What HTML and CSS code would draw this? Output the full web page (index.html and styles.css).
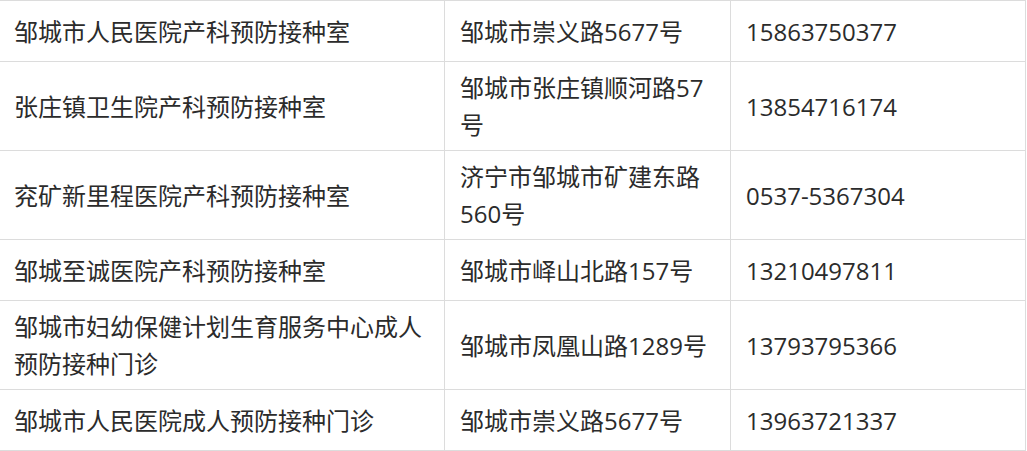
FILE: index.html
```html
<!DOCTYPE html>
<html lang="zh-CN">
<head>
<meta charset="utf-8">
<title>预防接种门诊</title>
<link rel="stylesheet" href="styles.css">
</head>
<body>
<table class="clinics">
  <colgroup>
    <col class="c-name">
    <col class="c-addr">
    <col class="c-tel">
  </colgroup>
  <tbody>
    <tr><td>邹城市人民医院产科预防接种室</td><td>邹城市崇义路5677号</td><td>15863750377</td></tr>
    <tr><td>张庄镇卫生院产科预防接种室</td><td>邹城市张庄镇顺河路57号</td><td>13854716174</td></tr>
    <tr><td>兖矿新里程医院产科预防接种室</td><td>济宁市邹城市矿建东路560号</td><td>0537-5367304</td></tr>
    <tr><td>邹城至诚医院产科预防接种室</td><td>邹城市峄山北路157号</td><td>13210497811</td></tr>
    <tr><td>邹城市妇幼保健计划生育服务中心成人预防接种门诊</td><td>邹城市凤凰山路1289号</td><td>13793795366</td></tr>
    <tr><td>邹城市人民医院成人预防接种门诊</td><td>邹城市崇义路5677号</td><td>13963721337</td></tr>
  </tbody>
</table>
</body>
</html>
```

FILE: styles.css
```css
html, body {
  margin: 0;
  padding: 0;
  background: #fff;
}

.clinics {
  border-collapse: separate;
  border-spacing: 0;
  table-layout: fixed;
  width: 1026px;
  border-top: 1px solid #dcdcdc;
  font-family: "Open Sans", "Noto Sans CJK SC", sans-serif;
  font-size: 24px;
  line-height: 37px;
  color: #2b2b2b;
}

.c-name { width: 445px; }
.c-addr { width: 286px; }
.c-tel { width: 295px; }

.clinics td {
  height: 46px;
  padding: 7px 15px;
  vertical-align: middle;
  border-right: 1px solid #dcdcdc;
  border-bottom: 1px solid #dcdcdc;
  word-break: normal;
}

.clinics td:first-child {
  padding-left: 14px;
}
```
